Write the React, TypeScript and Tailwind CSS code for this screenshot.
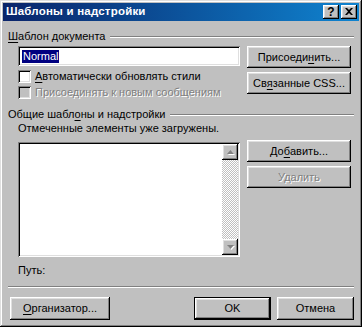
import React from 'react';

const raised =
  'shadow-[inset_-1px_-1px_0_#000,inset_1px_1px_0_#fff,inset_-2px_-2px_0_#808080,inset_2px_2px_0_#dfdfdf]';
const sunken =
  'shadow-[inset_1px_1px_0_#808080,inset_-1px_-1px_0_#fff,inset_2px_2px_0_#000,inset_-2px_-2px_0_#dfdfdf]';

interface BtnProps {
  children: React.ReactNode;
  className?: string;
  disabled?: boolean;
  isDefault?: boolean;
}

const Btn: React.FC<BtnProps> = ({ children, className = '', disabled = false, isDefault = false }) => {
  const inner = (
    <div
      className={`flex h-full w-full items-center justify-center bg-[#c0c0c0] ${raised} ${
        disabled ? 'text-[#808080] [text-shadow:1px_1px_0_#fff]' : ''
      }`}
    >
      {children}
    </div>
  );
  if (isDefault) {
    return <div className={`border border-black ${className}`}>{inner}</div>;
  }
  return <div className={className}>{inner}</div>;
};

const U: React.FC<{ children: React.ReactNode }> = ({ children }) => (
  <span className="underline decoration-1 underline-offset-[2px]">{children}</span>
);

const GroupHeader: React.FC<{ children: React.ReactNode }> = ({ children }) => (
  <div className="flex h-[13px] items-center">
    <span className="pr-[5px] leading-[13px]">{children}</span>
    <div className="h-[2px] flex-1 border-t border-b border-t-[#808080] border-b-white" />
  </div>
);

const Checkbox: React.FC<{ label: React.ReactNode; disabled?: boolean }> = ({ label, disabled }) => (
  <div className="flex h-[16px] items-center">
    <div className={`h-[13px] w-[13px] ${sunken} ${disabled ? 'bg-[#c0c0c0]' : 'bg-white'}`} />
    <span
      className={`ml-[4px] leading-[13px] ${disabled ? 'text-[#808080] [text-shadow:1px_1px_0_#fff]' : ''}`}
    >
      {label}
    </span>
  </div>
);

const Arrow: React.FC<{ down?: boolean }> = ({ down }) => (
  <div className={`flex h-[16px] w-[16px] items-center justify-center bg-[#c0c0c0] ${raised}`}>
    <svg width="7" height="5" viewBox="0 0 7 5" className="overflow-visible">
      <polygon points={down ? '1,1 8,1 4.5,5' : '1,5 8,5 4.5,1'} fill="#fff" />
      <polygon points={down ? '0,0 7,0 3.5,4' : '0,4 7,4 3.5,0'} fill="#808080" />
    </svg>
  </div>
);

export default function App() {
  return (
    <div
      className={`h-[327px] w-[362px] bg-[#c0c0c0] p-[3px] font-['Liberation_Sans',Arial,sans-serif] text-[11px] text-black shadow-[inset_-1px_-1px_0_#000,inset_1px_1px_0_#dfdfdf,inset_-2px_-2px_0_#808080,inset_2px_2px_0_#fff]`}
    >
      {/* title bar */}
      <div className="flex h-[18px] items-center bg-gradient-to-r from-[#0a246a] to-[#1084d0] pl-[3px] pr-[2px]">
        <span className="flex-1 text-[11.5px] font-bold tracking-[0.2px] text-white">Шаблоны и надстройки</span>
        <div className={`flex h-[14px] w-[16px] items-center justify-center bg-[#c0c0c0] ${raised}`}>
          <span className="mt-[-1px] text-[12px] font-bold leading-none">?</span>
        </div>
        <div className={`ml-[2px] flex h-[14px] w-[16px] items-center justify-center bg-[#c0c0c0] ${raised}`}>
          <svg width="8" height="7" viewBox="0 0 8 7" className="mt-[-1px]">
            <path d="M0 0h2l2 2 2-2h2L5 3.5 8 7H6L4 5 2 7H0l3-3.5z" fill="#000" />
          </svg>
        </div>
      </div>

      <div className="pl-[5px] pr-[5px]">
        <div className="mt-[9px]">
          <GroupHeader>
            <U>Ш</U>аблон документа
          </GroupHeader>
        </div>

        <div className="mt-[3px] flex items-start">
          <div className="ml-[10px] w-[222px]">
            <div className={`h-[20px] bg-white pl-[4px] pt-[2px] ${sunken}`}>
              <span className="inline-block bg-[#000080] px-[1px] leading-[13px] text-white">Normal</span>
            </div>
            <div className="mt-[2px]">
              <Checkbox
                label={
                  <>
                    <U>А</U>втоматически обновлять стили
                  </>
                }
              />
              <Checkbox label="Присоединять к новым сообщениям" disabled />
            </div>
          </div>
          <div className="ml-[7px] flex w-[104px] flex-col gap-[4px]">
            <Btn className="h-[22px]">
              Присоеди<U>н</U>ить...
            </Btn>
            <Btn className="h-[22px]">
              Св<U>я</U>занные CSS...
            </Btn>
          </div>
        </div>

        <div className="mt-[8px]">
          <GroupHeader>
            Общие шабл<U>о</U>ны и надстройки
          </GroupHeader>
        </div>

        <div className="ml-[10px] mt-[1px] leading-[13px]">Отмеченные элементы уже загружены.</div>

        <div className="mt-[5px] flex items-start">
          <div className={`ml-[10px] mt-[2px] flex h-[115px] w-[222px] bg-white p-[2px] ${sunken}`}>
            <div className="flex-1" />
            <div className="flex w-[16px] flex-col">
              <Arrow />
              <div className="flex-1 bg-[repeating-conic-gradient(#c0c0c0_0%_25%,#ffffff_0%_50%)] bg-[length:2px_2px]" />
              <Arrow down />
            </div>
          </div>
          <div className="ml-[7px] flex w-[104px] flex-col gap-[4px]">
            <Btn className="h-[22px]">
              До<U>б</U>авить...
            </Btn>
            <Btn className="h-[22px]" disabled>
              Удалить
            </Btn>
          </div>
        </div>

        <div className="ml-[10px] mt-[7px] leading-[13px]">Путь:</div>

        <div className="mt-[9px] h-[2px] border-t border-b border-t-[#808080] border-b-white" />

        <div className="mt-[9px] flex items-center">
          <Btn className="ml-[2px] h-[23px] w-[100px]">
            <span>
              <U>О</U>рганизатор...
            </span>
          </Btn>
          <div className="flex-1" />
          <Btn className="h-[23px] w-[77px]" isDefault>
            OK
          </Btn>
          <Btn className="ml-[6px] h-[23px] w-[77px]">Отмена</Btn>
        </div>
      </div>
    </div>
  );
}
